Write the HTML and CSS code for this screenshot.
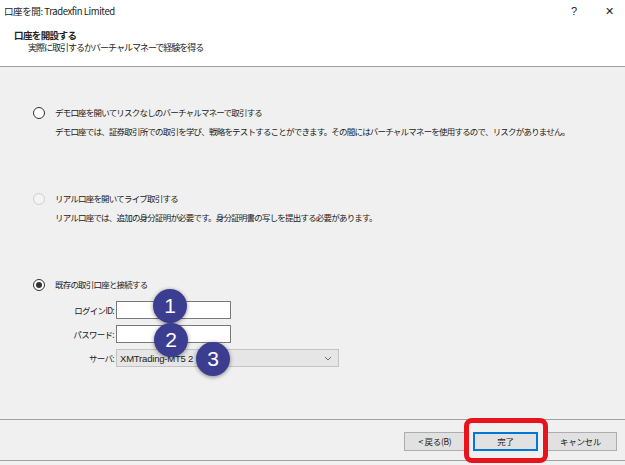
FILE: index.html
```html
<!DOCTYPE html>
<html lang="ja">
<head>
    <meta charset="UTF-8">
    <link rel="stylesheet" href="styles.css">
    <title>口座を開</title>
</head>
<body>
    <div class="dialog">
        <div class="titlebar">
            <span class="title">口座を開: Tradexfin Limited</span>
            <span class="help">?</span>
            <span class="close">✕</span>
        </div>
        <div class="header">
            <div class="header-title">口座を開設する</div>
            <div class="header-sub">実際に取引するかバーチャルマネーで経験を得る</div>
        </div>
        <div class="content">
            <div class="option">
                <div class="option-row">
                    <span class="radio"></span>
                    <span class="label">デモ口座を開いてリスクなしのバーチャルマネーで取引する</span>
                </div>
                <div class="desc">デモ口座では、証券取引所での取引を学び、戦略をテストすることができます。その間にはバーチャルマネーを使用するので、リスクがありません。</div>
            </div>
            <div class="option">
                <div class="option-row">
                    <span class="radio disabled"></span>
                    <span class="label">リアル口座を開いてライブ取引する</span>
                </div>
                <div class="desc">リアル口座では、追加の身分証明が必要です。身分証明書の写しを提出する必要があります。</div>
            </div>
            <div class="option">
                <div class="option-row">
                    <span class="radio checked"></span>
                    <span class="label">既存の取引口座と接続する</span>
                </div>
                <div class="form">
                    <span class="form-label">ログインID:</span>
                    <span class="input"></span>
                    <span class="form-label">パスワード:</span>
                    <span class="input"></span>
                    <span class="form-label">サーバ:</span>
                    <span class="select">
                        <span>XMTrading-MT5 2</span>
                        <svg width="8" height="5" viewBox="0 0 8 5"><path d="M1 1 L4 4 L7 1" fill="none" stroke="#707070" stroke-width="1"/></svg>
                    </span>
                </div>
            </div>
        </div>
        <div class="footer">
            <button class="btn back">&lt; 戻る(B)</button>
            <button class="btn finish">完了</button>
            <button class="btn cancel">キャンセル</button>
        </div>
    </div>

    <span class="marker m1">1</span>
    <span class="marker m2">2</span>
    <span class="marker m3">3</span>
    <span class="highlight"></span>
</body>
</html>
```

FILE: styles.css
```css
body {
    margin: 0;
    font-family: "Noto Sans CJK JP", "Liberation Sans", sans-serif;
    color: #222;
    background-color: #f0f0f0;
}

.dialog {
    width: 625px;
    height: 465px;
    display: flex;
    flex-direction: column;
    background-color: #f0f0f0;
}

.titlebar {
    height: 22px;
    display: flex;
    align-items: center;
    background-color: #fff;
    font-size: 9.5px;
    letter-spacing: -0.4px;
    padding-left: 4px;
}

.title {
    flex: 1;
}

.help {
    font-family: "Liberation Sans", sans-serif;
    font-size: 11px;
    width: 34px;
}

.close {
    font-family: "DejaVu Sans", sans-serif;
    font-size: 11px;
    width: 20px;
}

.header {
    height: 45px;
    background-color: #fff;
    border-bottom: 1px solid #a0a0a0;
    padding-left: 14px;
    padding-top: 7px;
    box-sizing: border-box;
}

.header-title {
    font-size: 9.5px;
    font-weight: bold;
    letter-spacing: -0.6px;
    line-height: 13px;
}

.header-sub {
    font-size: 9px;
    letter-spacing: -1px;
    line-height: 12px;
    padding-left: 14px;
}

.content {
    height: 352px;
    box-sizing: border-box;
    padding-top: 38px;
    padding-left: 33px;
}

.option {
    margin-bottom: 53px;
}

.option-row {
    display: flex;
    align-items: center;
    height: 14px;
}

.radio {
    width: 10px;
    height: 10px;
    border: 1px solid #333;
    border-radius: 50%;
    background-color: #fff;
    margin-right: 10px;
    margin-top: 2px;
    display: flex;
    align-items: center;
    justify-content: center;
}

.radio.disabled {
    border-color: #cfcfcf;
    background-color: #f4f4f4;
}

.radio.checked::after {
    content: "";
    width: 6px;
    height: 6px;
    border-radius: 50%;
    background-color: #333;
}

.label,
.desc {
    font-size: 8.5px;
    letter-spacing: -0.8px;
    line-height: 14px;
}

.desc {
    margin-top: 5px;
    padding-left: 22px;
}

.form {
    display: grid;
    grid-template-columns: 60px auto;
    column-gap: 2px;
    row-gap: 6px;
    margin-top: 10px;
    margin-left: 21px;
    align-items: center;
    justify-items: start;
}

.form-label {
    justify-self: end;
    font-size: 8.5px;
    letter-spacing: -0.7px;
}

.input {
    width: 115px;
    height: 18px;
    box-sizing: border-box;
    border: 1px solid #7a7a7a;
    background-color: #fff;
}

.select {
    width: 223px;
    height: 18px;
    box-sizing: border-box;
    border: 1px solid #c4c4c4;
    background-color: #e6e6e6;
    display: flex;
    align-items: center;
    justify-content: space-between;
    padding: 0 6px 0 3px;
    font-family: "Liberation Sans", sans-serif;
    font-size: 9.5px;
    letter-spacing: -0.2px;
}

.footer {
    height: 42px;
    box-sizing: border-box;
    border-top: 1px solid #a0a0a0;
    border-bottom: 1px solid #a0a0a0;
    display: flex;
    align-items: center;
    justify-content: flex-end;
    padding-right: 8px;
    padding-top: 2px;
}

.btn {
    height: 19px;
    margin: 0 0 0 7px;
    padding: 0;
    background-color: #e1e1e1;
    border: 1px solid #adadad;
    font-family: "Noto Sans CJK JP", sans-serif;
    font-size: 8.5px;
    letter-spacing: -0.3px;
    color: #222;
}

.back {
    width: 62px;
}

.finish {
    width: 65px;
    border-color: #0078d7;
    box-shadow: inset 0 0 0 1px #0078d7;
}

.cancel {
    width: 73px;
    margin-left: 6px;
}

.marker {
    position: absolute;
    width: 34px;
    height: 34px;
    border-radius: 50%;
    background-color: #3b3e90;
    box-shadow: 0 1px 4px rgba(0, 0, 0, 0.45);
    color: #fff;
    font-family: "Liberation Sans", sans-serif;
    font-size: 21px;
    display: flex;
    align-items: center;
    justify-content: center;
}

.m1 { left: 153px; top: 289px; }
.m2 { left: 154px; top: 323px; }
.m3 { left: 196px; top: 342px; }

.highlight {
    position: absolute;
    left: 464px;
    top: 418px;
    width: 84px;
    height: 45px;
    box-sizing: border-box;
    border: 5px solid #e8131b;
    border-radius: 8px;
}
```
